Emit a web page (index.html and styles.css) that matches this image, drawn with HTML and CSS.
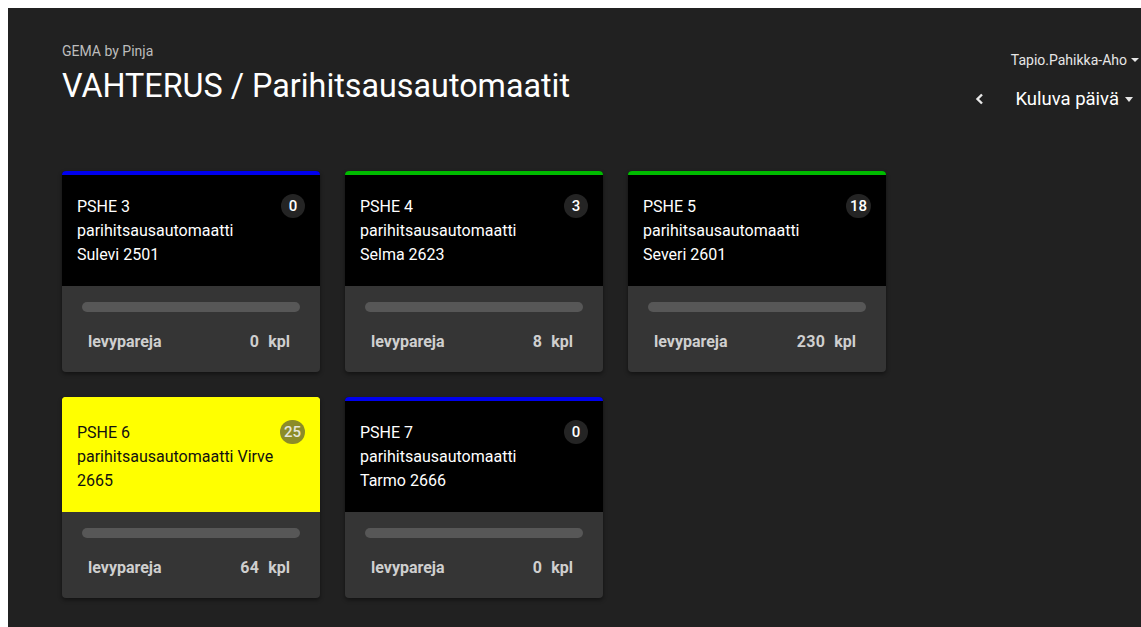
FILE: index.html
```html
<!DOCTYPE html>
<html lang="fi">
<head>
<meta charset="utf-8">
<title>VAHTERUS / Parihitsausautomaatit</title>
<link rel="stylesheet" href="styles.css">
</head>
<body>
<div class="app">
  <header class="topbar">
    <div class="brand">
      <div class="brand-sub">GEMA by Pinja</div>
      <h1 class="brand-title">VAHTERUS / Parihitsausautomaatit</h1>
    </div>
    <div class="controls">
      <div class="user">Tapio.Pahikka-Aho <span class="caret"></span></div>
      <div class="period">
        <span class="prev">
          <svg width="10" height="12" viewBox="0 0 10 12"><path d="M7 1.5 L2.5 6 L7 10.5" fill="none" stroke="#e8e8e8" stroke-width="2.4" stroke-linejoin="miter"/></svg>
        </span>
        <span class="period-label">Kuluva päivä</span>
        <span class="caret caret-lg"></span>
      </div>
    </div>
  </header>

  <main class="grid">
    <article class="card">
      <div class="card-head status-blue">
        <div class="card-name">PSHE 3<br>parihitsausautomaatti<br>Sulevi 2501</div>
        <span class="badge">0</span>
      </div>
      <div class="card-body">
        <div class="bar"></div>
        <div class="stat"><span class="stat-label">levypareja</span><span class="stat-value">0<span class="unit">kpl</span></span></div>
      </div>
    </article>

    <article class="card">
      <div class="card-head status-green">
        <div class="card-name">PSHE 4<br>parihitsausautomaatti<br>Selma 2623</div>
        <span class="badge">3</span>
      </div>
      <div class="card-body">
        <div class="bar"></div>
        <div class="stat"><span class="stat-label">levypareja</span><span class="stat-value">8<span class="unit">kpl</span></span></div>
      </div>
    </article>

    <article class="card">
      <div class="card-head status-green">
        <div class="card-name">PSHE 5<br>parihitsausautomaatti<br>Severi 2601</div>
        <span class="badge">18</span>
      </div>
      <div class="card-body">
        <div class="bar"></div>
        <div class="stat"><span class="stat-label">levypareja</span><span class="stat-value">230<span class="unit">kpl</span></span></div>
      </div>
    </article>

    <article class="card">
      <div class="card-head status-warn">
        <div class="card-name">PSHE 6<br>parihitsausautomaatti Virve<br>2665</div>
        <span class="badge">25</span>
      </div>
      <div class="card-body">
        <div class="bar"></div>
        <div class="stat"><span class="stat-label">levypareja</span><span class="stat-value">64<span class="unit">kpl</span></span></div>
      </div>
    </article>

    <article class="card">
      <div class="card-head status-blue">
        <div class="card-name">PSHE 7<br>parihitsausautomaatti<br>Tarmo 2666</div>
        <span class="badge">0</span>
      </div>
      <div class="card-body">
        <div class="bar"></div>
        <div class="stat"><span class="stat-label">levypareja</span><span class="stat-value">0<span class="unit">kpl</span></span></div>
      </div>
    </article>
  </main>
</div>
</body>
</html>
```

FILE: styles.css
```css
html, body {
  background: #ffffff;
}

body {
  margin: 8px 0 0 8px;
  font-family: Roboto, "Liberation Sans", Arial, sans-serif;
  overflow: hidden;
}

.app {
  background: #212121;
  min-height: 619px;
  color: #ffffff;
  padding: 0 2px 0 54px;
}

/* header */
.topbar {
  display: flex;
  justify-content: space-between;
  align-items: flex-start;
  height: 163px;
}

.brand {
  padding-top: 35px;
}

.brand-sub {
  font-size: 14px;
  line-height: 16px;
  color: #bdbdbd;
}

.brand-title {
  margin: 8px 0 0 0;
  font-size: 32.3px;
  font-weight: 400;
  line-height: 38px;
  color: #ffffff;
}

.controls {
  padding-top: 44px;
  display: flex;
  flex-direction: column;
  align-items: flex-end;
}

.user {
  font-size: 14px;
  line-height: 16px;
  color: #e6e6e6;
  display: flex;
  align-items: center;
  gap: 4px;
}

.caret {
  display: inline-block;
  width: 0;
  height: 0;
  border-left: 4px solid transparent;
  border-right: 4px solid transparent;
  border-top: 4px solid #e6e6e6;
}

.caret-lg {
  border-left-width: 4.5px;
  border-right-width: 4.5px;
  border-top-width: 5px;
}

.period {
  margin-top: 19px;
  margin-right: 6px;
  display: flex;
  align-items: center;
  font-size: 18.5px;
  line-height: 24px;
  color: #ffffff;
}

.prev {
  display: flex;
  align-items: center;
  margin-right: 30px;
}

.period-label {
  margin-right: 6px;
}

/* cards */
.grid {
  display: grid;
  grid-template-columns: repeat(3, 258px);
  column-gap: 25px;
  row-gap: 25px;
}

.card {
  border-radius: 4px;
  overflow: hidden;
  background: #353535;
  box-shadow: 0 2px 4px rgba(0, 0, 0, 0.45);
}

.card-head {
  display: flex;
  justify-content: space-between;
  align-items: flex-start;
  height: 115px;
  box-sizing: border-box;
  padding: 20px 15px 0 15px;
  border-top: 4px solid transparent;
  background: #000000;
  color: #ffffff;
}

.status-blue {
  border-top-color: #0000ee;
}

.status-green {
  border-top-color: #00bb00;
}

.status-warn {
  border-top-color: #ffff00;
  background: #ffff00;
  color: #111111;
}

.card-name {
  font-size: 16px;
  line-height: 24px;
}

.badge {
  flex: none;
  min-width: 24px;
  height: 24px;
  margin-top: -1px;
  padding: 0 4px;
  box-sizing: border-box;
  border-radius: 12px;
  background: #242424;
  color: #ffffff;
  font-size: 15px;
  font-weight: 500;
  line-height: 24px;
  text-align: center;
}

.status-warn .badge {
  background: #8c8c28;
  color: #e6e6d8;
}

.card-body {
  padding: 16px 20px 0 20px;
  height: 86px;
  box-sizing: border-box;
}

.bar {
  height: 10px;
  border-radius: 5px;
  background: #575757;
}

.stat {
  display: flex;
  justify-content: space-between;
  align-items: center;
  margin-top: 17px;
  padding: 0 10px 0 6px;
  font-size: 16px;
  font-weight: 700;
  line-height: 26px;
  color: #cfcfcf;
}

.stat-value {
  letter-spacing: 0.3px;
}

.unit {
  margin-left: 9px;
  letter-spacing: 0;
}
```
